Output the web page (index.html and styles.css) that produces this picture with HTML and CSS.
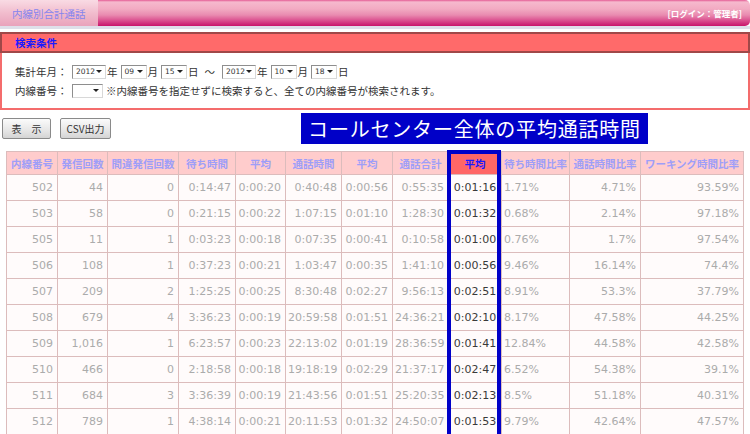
FILE: index.html
```html
<!DOCTYPE html>
<html lang="ja">
<head>
<meta charset="utf-8">
<title>内線別合計通話</title>
<link rel="stylesheet" href="styles.css">
</head>
<body>
<div class="header">
  <div class="tab">内線別合計通話</div>
  <div class="login">[ログイン：管理者]</div>
</div>
<div class="sep"></div>
<div class="cond-title">検索条件</div>
<div class="cond-box">
  <div class="row">
    <span class="lbl">集計年月：</span>
    <span class="sel w34">2012</span><span class="unit">年</span>
    <span class="sel w26">09</span><span class="unit">月</span>
    <span class="sel w26">15</span><span class="unit">日</span>
    <span class="tilde">～</span>
    <span class="sel w34">2012</span><span class="unit">年</span>
    <span class="sel w26">10</span><span class="unit">月</span>
    <span class="sel w26">18</span><span class="unit">日</span>
  </div>
  <div class="row">
    <span class="lbl">内線番号：</span>
    <span class="sel w31"></span>
    <span class="note">※内線番号を指定せずに検索すると、全ての内線番号が検索されます。</span>
  </div>
</div>
<div class="actions">
  <button class="btn b1">表　示</button>
  <button class="btn b2">CSV出力</button>
  <div class="banner">コールセンター全体の平均通話時間</div>
</div>
<div class="table-wrap">
  <table class="grid">
    <colgroup>
      <col style="width:51px"><col style="width:50px"><col style="width:71px"><col style="width:57px">
      <col style="width:50px"><col style="width:56px"><col style="width:51px"><col style="width:56px">
      <col style="width:53px"><col style="width:68px"><col style="width:71px"><col style="width:103px">
    </colgroup>
    <thead>
      <tr>
        <th>内線番号</th><th>発信回数</th><th>間違発信回数</th><th>待ち時間</th><th>平均</th><th>通話時間</th>
        <th>平均</th><th>通話合計</th><th class="hl">平均</th><th>待ち時間比率</th><th>通話時間比率</th><th>ワーキング時間比率</th>
      </tr>
    </thead>
    <tbody>
      <tr><td>502</td><td>44</td><td>0</td><td>0:14:47</td><td>0:00:20</td><td>0:40:48</td><td>0:00:56</td><td>0:55:35</td><td class="hl">0:01:16</td><td class="l">1.71%</td><td>4.71%</td><td>93.59%</td></tr>
      <tr><td>503</td><td>58</td><td>0</td><td>0:21:15</td><td>0:00:22</td><td>1:07:15</td><td>0:01:10</td><td>1:28:30</td><td class="hl">0:01:32</td><td class="l">0.68%</td><td>2.14%</td><td>97.18%</td></tr>
      <tr><td>505</td><td>11</td><td>1</td><td>0:03:23</td><td>0:00:18</td><td>0:07:35</td><td>0:00:41</td><td>0:10:58</td><td class="hl">0:01:00</td><td class="l">0.76%</td><td>1.7%</td><td>97.54%</td></tr>
      <tr><td>506</td><td>108</td><td>1</td><td>0:37:23</td><td>0:00:21</td><td>1:03:47</td><td>0:00:35</td><td>1:41:10</td><td class="hl">0:00:56</td><td class="l">9.46%</td><td>16.14%</td><td>74.4%</td></tr>
      <tr><td>507</td><td>209</td><td>2</td><td>1:25:25</td><td>0:00:25</td><td>8:30:48</td><td>0:02:27</td><td>9:56:13</td><td class="hl">0:02:51</td><td class="l">8.91%</td><td>53.3%</td><td>37.79%</td></tr>
      <tr><td>508</td><td>679</td><td>4</td><td>3:36:23</td><td>0:00:19</td><td>20:59:58</td><td>0:01:51</td><td>24:36:21</td><td class="hl">0:02:10</td><td class="l">8.17%</td><td>47.58%</td><td>44.25%</td></tr>
      <tr><td>509</td><td>1,016</td><td>1</td><td>6:23:57</td><td>0:00:23</td><td>22:13:02</td><td>0:01:19</td><td>28:36:59</td><td class="hl">0:01:41</td><td class="l">12.84%</td><td>44.58%</td><td>42.58%</td></tr>
      <tr><td>510</td><td>466</td><td>0</td><td>2:18:58</td><td>0:00:18</td><td>19:18:19</td><td>0:02:29</td><td>21:37:17</td><td class="hl">0:02:47</td><td class="l">6.52%</td><td>54.38%</td><td>39.1%</td></tr>
      <tr><td>511</td><td>684</td><td>3</td><td>3:36:39</td><td>0:00:19</td><td>21:43:56</td><td>0:01:51</td><td>25:20:35</td><td class="hl">0:02:13</td><td class="l">8.5%</td><td>51.18%</td><td>40.31%</td></tr>
      <tr><td>512</td><td>789</td><td>1</td><td>4:38:14</td><td>0:00:21</td><td>20:11:53</td><td>0:01:32</td><td>24:50:07</td><td class="hl">0:01:53</td><td class="l">9.79%</td><td>42.64%</td><td>47.57%</td></tr>
    </tbody>
  </table>
  <div class="highlight"></div>
</div>
</body>
</html>
```
FILE: styles.css
```css
html, body {
  margin: 0;
  padding: 0;
  width: 750px;
  height: 434px;
  overflow: hidden;
  background: #fff;
}
body {
  font-family: "Noto Sans CJK JP", "Noto Sans", sans-serif;
  font-size: 10.5px;
  color: #333;
}
.header {
  height: 26px;
  display: flex;
  justify-content: space-between;
  align-items: center;
  background: linear-gradient(#e45c95 0px, #f6b9cd 2px, #f2aac2 9px, #e98bb0 15px, #dc5592 20px, #c8146a 26px);
  border-radius: 0 5px 5px 0;
}
.tab {
  width: 98px;
  height: 100%;
  box-sizing: border-box;
  padding-left: 12px;
  display: flex;
  align-items: center;
  background: linear-gradient(#f9dbe4, #f1bccd 50%, #e9a2bb);
  color: #8585ee;
  font-size: 10.5px;
}
.login {
  color: #fff;
  font-weight: bold;
  font-size: 8.5px;
  padding-right: 8px;
}
.sep {
  height: 3px;
  background: #dedfe9;
  margin-bottom: 3px;
}
.cond-title {
  height: 21px;
  box-sizing: border-box;
  border: 2px solid #a04848;
  background: #ff6a6a;
  color: #1a1aff;
  font-weight: bold;
  padding-left: 13px;
  display: flex;
  align-items: center;
}
.cond-box {
  height: 57px;
  box-sizing: border-box;
  border: 2px solid #f46c6c;
  border-top: 0;
  padding: 9px 0 0 13px;
}
.row {
  height: 19px;
  display: flex;
  align-items: center;
  white-space: nowrap;
  color: #333;
}
.lbl {
  width: 57px;
}
.sel {
  display: inline-block;
  position: relative;
  height: 14px;
  box-sizing: border-box;
  border: 1px solid;
  border-color: #8e8e8e #d8d8d8 #d8d8d8 #8e8e8e;
  background: #fff;
  font-family: "DejaVu Sans", sans-serif;
  font-size: 7.5px;
  line-height: 12px;
  padding-left: 3px;
  color: #333;
}
.sel::after {
  content: "";
  position: absolute;
  right: 3px;
  top: 4px;
  border-left: 3px solid transparent;
  border-right: 3px solid transparent;
  border-top: 3px solid #222;
}
.w34 { width: 34px; }
.w26 { width: 26px; }
.w31 { width: 31px; }
.unit {
  margin-left: 1px;
  margin-right: 3px;
}
.tilde {
  margin-left: 3px;
  margin-right: 7px;
}
.note {
  margin-left: 3px;
}
.actions {
  height: 41px;
  display: flex;
  align-items: flex-start;
}
.btn {
  margin-top: 8px;
  height: 21px;
  box-sizing: border-box;
  border: 1px solid #8a8a8a;
  border-radius: 2px;
  background: linear-gradient(#fbfbfb, #e6e6e6 60%, #d4d4d4);
  font-family: "Noto Sans CJK JP", sans-serif;
  font-size: 10px;
  color: #333;
  padding: 0;
}
.b1 {
  margin-left: 2px;
  width: 49px;
}
.b2 {
  margin-left: 9px;
  width: 51px;
}
.banner {
  margin-left: 190px;
  margin-top: 3px;
  width: 347px;
  height: 31px;
  background: #0000c8;
  color: #fff;
  font-size: 20px;
  letter-spacing: 0.8px;
  display: flex;
  align-items: center;
  justify-content: center;
}
.table-wrap {
  position: relative;
  margin-left: 6px;
}
.grid {
  border-collapse: collapse;
  table-layout: fixed;
  width: 737px;
}
.grid th, .grid td {
  border: 1px solid #dcbcbc;
  white-space: nowrap;
  overflow: hidden;
}
.grid th {
  height: 22px;
  padding: 0;
  background: #ffcccc;
  color: #9e9ef8;
  font-weight: bold;
  font-size: 10.5px;
  text-align: center;
}
.grid th.hl {
  background: #ff6666;
  color: #1a1aff;
}
.grid td {
  height: 25px;
  padding: 0 4px 0 2px;
  background: #fffbfb;
  color: #ababab;
  font-family: "DejaVu Sans", sans-serif;
  font-size: 11px;
  text-align: right;
}
.grid td.l {
  text-align: left;
}
.grid td.hl {
  color: #3a3a3a;
  text-align: center;
  padding: 0;
}
.highlight {
  position: absolute;
  left: 441px;
  top: -1px;
  width: 54px;
  height: 300px;
  box-sizing: border-box;
  border: 4px solid #0000c8;
  pointer-events: none;
}
```
